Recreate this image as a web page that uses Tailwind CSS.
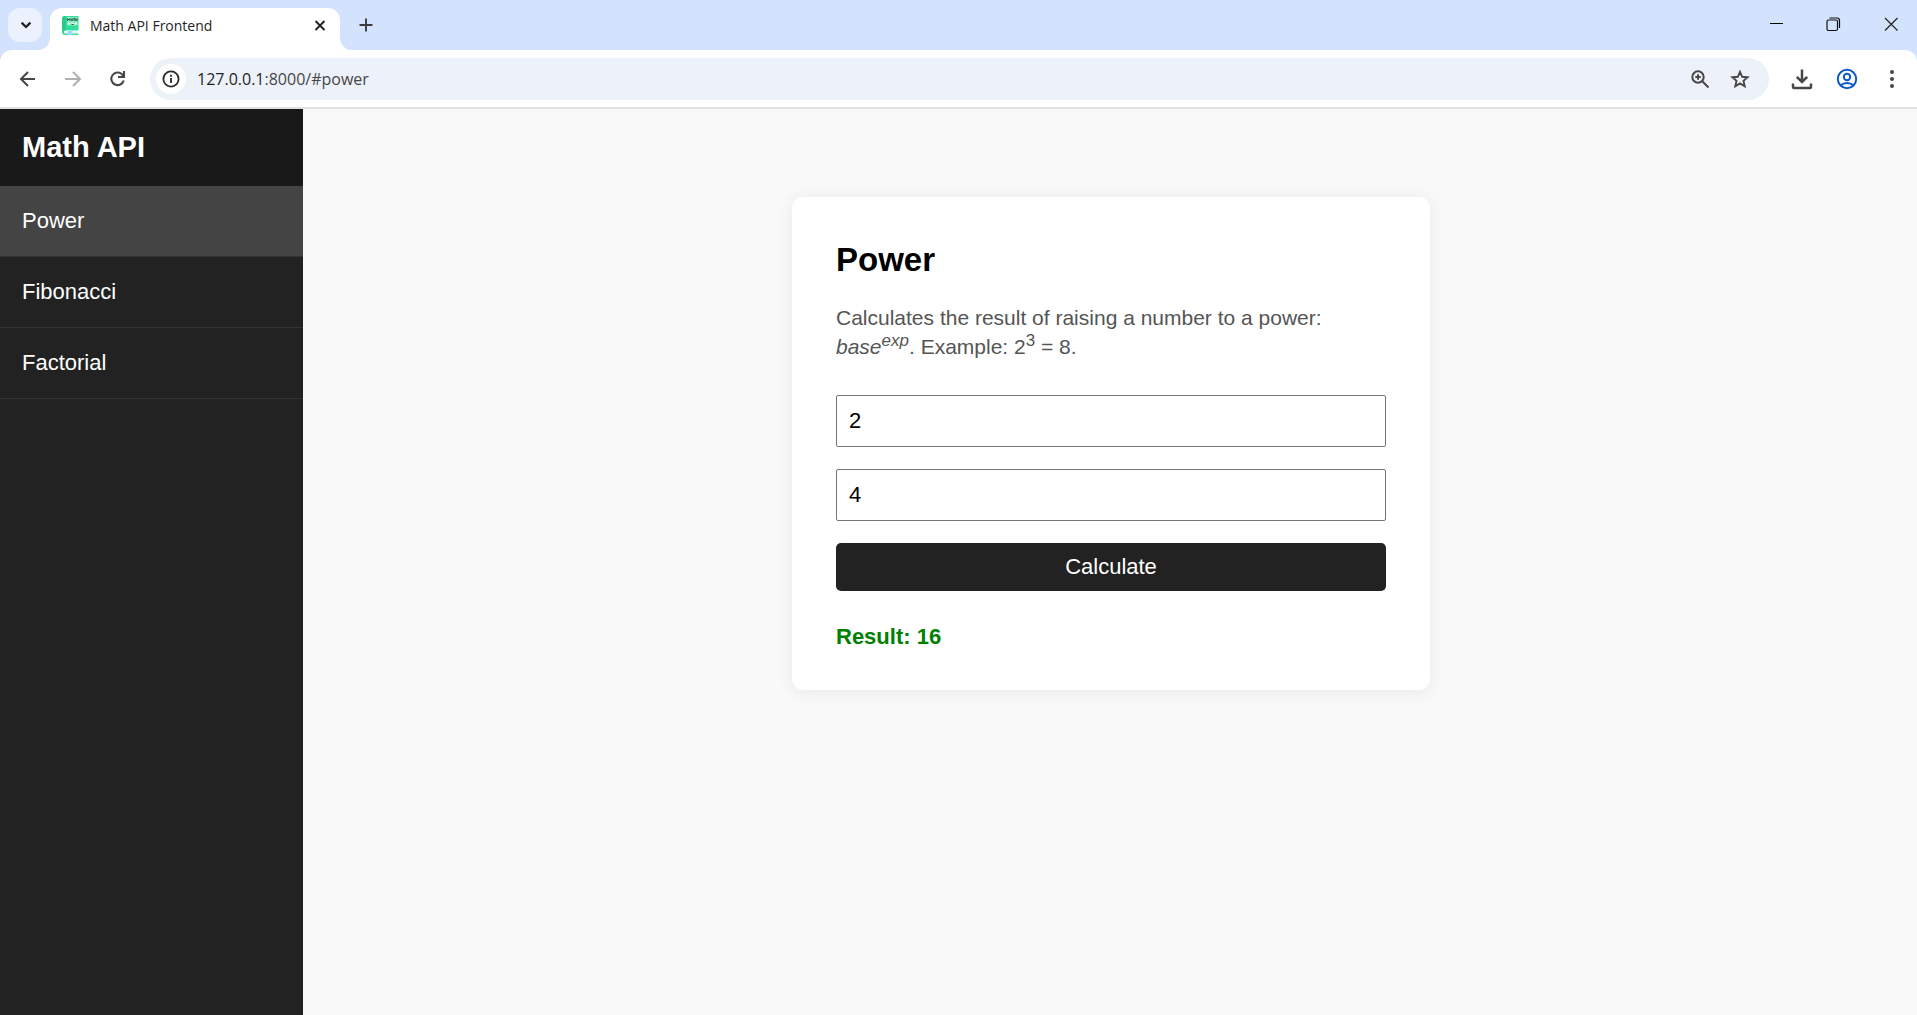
<!DOCTYPE html>
<html lang="en">
<head>
<meta charset="utf-8">
<title>Math API Frontend</title>
<script src="https://cdn.jsdelivr.net/npm/@tailwindcss/browser@4"></script>
</head>
<body class="flex min-h-screen flex-col bg-[#f9f9f9] font-['Liberation_Sans',Arial,sans-serif] text-black">

<!-- Browser chrome -->
<header class="bg-[#d3e3fd] font-['Open_Sans','Noto_Sans',sans-serif]">
  <div class="flex h-[50px] items-start">
    <button aria-label="Search tabs" class="mt-2 ml-2 flex size-[34px] items-center justify-center rounded-xl bg-[#ebf1fd]">
      <svg class="size-4" viewBox="0 0 16 16" fill="none" stroke="#1f1f1f" stroke-width="2.2"><path d="M4.600 5.600 9 10l4.400-4.400"/></svg>
    </button>
    <div class="relative mt-2 ml-2 flex h-[42px] w-[290px] items-center rounded-t-xl bg-white pr-3 pb-[7px] pl-3">
      <svg class="absolute bottom-0 -left-3 size-3" viewBox="0 0 12 12" fill="#fff"><path d="M12 0v12H0A12 12 0 0 0 12 0z"/></svg>
      <svg class="absolute -right-3 bottom-0 size-3" viewBox="0 0 12 12" fill="#fff"><path d="M0 0v12h12A12 12 0 0 1 0 0z"/></svg>
      <svg class="h-5 w-[17px]" viewBox="0 0 17 20">
        <path d="M3 0h13.500v14.500H3.500a1.500 1.500 0 0 0 0 3H16.500v1.500H3a3 3 0 0 1-3-3V3a3 3 0 0 1 3-3z" fill="#34dd9c"/>
        <path d="M0 3a3 3 0 0 1 3-3h1v14a4 4 0 0 0-4 2z" fill="#2bc98b"/>
        <path d="M3.500 15H16v2H3.500a1 1 0 0 1 0-2z" fill="#e8f6fb"/>
        <path d="M5.500 15h5v5L8 18.500 5.500 20z" fill="#9bdcff"/>
        <path d="M5 1h10.500v8.500H5z" fill="#8be9c4"/>
        <path d="M5.500 5V2.500L7 4l1-1.500V5M9 5l1-2.500L11 5M11.200 2.500h2M12.200 2.500V5M13.700 2.500V5M15.200 2.500V5M14 3.700h1" fill="none" stroke="#1d5b46" stroke-width=".9"/>
        <path d="M6 7.500h2M9.500 7.500h2M13 7.500h2" stroke="#eafff6" stroke-width="1.500"/><path d="M9.500 8.500h2" stroke="#1d5b46"/>
      </svg>
      <span class="ml-[11px] flex-1 text-sm text-[#1f1f1f]">Math API Frontend</span>
      <button aria-label="Close tab" class="flex size-4 items-center justify-center">
        <svg class="size-4" viewBox="0 0 16 16" stroke="#1f1f1f" stroke-width="1.900"><path d="m3.500 3 9 9m0-9-9 9"/></svg>
      </button>
    </div>
    <button aria-label="New tab" class="mt-[17px] ml-[18px] flex size-4 items-center justify-center">
      <svg class="size-4" viewBox="0 0 16 16" stroke="#3c3c3c" stroke-width="1.900"><path d="M8 1.500v13M1.500 8h13"/></svg>
    </button>
    <div class="ml-auto flex h-12 items-center gap-[42px] pr-[18px]">
      <button aria-label="Minimize" class="size-4"><svg class="size-4" viewBox="0 0 16 16" stroke="#000"><path d="M3 7.500h13"/></svg></button>
      <button aria-label="Restore" class="size-4"><svg class="size-4" viewBox="0 0 16 16" fill="none" stroke="#111" stroke-width="1.200"><rect x="2" y="4" width="10.500" height="10.500" rx="1.500"/><path d="M4.500 2H12a2.500 2.500 0 0 1 2.500 2.500V12"/></svg></button>
      <button aria-label="Close" class="size-4"><svg class="size-4" viewBox="0 0 16 16" stroke="#222" stroke-width="1.200"><path d="m2 2 12.500 12.500M14.500 2 2 14.500"/></svg></button>
    </div>
  </div>

  <div class="flex h-[59px] items-center rounded-t-xl border-b-2 border-[#e1e1e1] bg-white pr-3.5 pl-[18px]">
    <button aria-label="Back" class="size-5"><svg class="size-5" viewBox="0 0 20 20" fill="none" stroke="#474747" stroke-width="2"><path d="M17 10H3.500M10 3l-7 7 7 7"/></svg></button>
    <button aria-label="Forward" class="ml-[25px] size-5"><svg class="size-5" viewBox="0 0 20 20" fill="none" stroke="#b0b0b0" stroke-width="2"><path d="M2 10h14.500M10 3l7 7-7 7"/></svg></button>
    <button aria-label="Reload" class="ml-[25px] size-5"><svg class="size-5" viewBox="0 0 20 20" fill="none" stroke="#474747" stroke-width="2.100"><path d="M15.700 11.500A6.300 6.300 0 1 1 14 5.300l1.500 1.700"/><path d="M16 2v6h-6"/></svg></button>
    <div class="ml-[22px] flex h-[42px] flex-1 items-center rounded-full bg-[#edf1fa] pr-[19px] pl-1.5">
      <button aria-label="Site information" class="flex size-[30px] items-center justify-center rounded-full bg-white">
        <svg class="size-[18px]" viewBox="0 0 18 18" fill="none" stroke="#2b2b2b" stroke-width="1.800"><circle cx="9" cy="9" r="7.600"/><path d="M9 8v5M9 4.800v1.900"/></svg>
      </button>
      <div class="ml-[11px] flex-1 text-base text-[#474747]"><span class="text-[#1f1f1f]">127.0.0.1</span>:8000/#power</div>
      <button aria-label="Zoom" class="size-5"><svg class="size-5" viewBox="0 0 20 20" fill="none" stroke="#474747" stroke-width="2"><circle cx="8" cy="8" r="5.700"/><path d="m12 12 6.500 6.500M8 5.300v5.400M5.300 8h5.400"/></svg></button>
      <button aria-label="Bookmark this page" class="ml-5 size-5"><svg class="size-5" viewBox="0 0 20 20" fill="none" stroke="#474747" stroke-width="1.900"><path d="m10 2.800 2.200 5 5.400.5-4.100 3.600 1.200 5.300-4.700-2.800-4.700 2.800 1.200-5.300-4.100-3.600 5.400-.5z"/></svg></button>
    </div>
    <button aria-label="Downloads" class="ml-[22px] size-[22px]"><svg class="size-[22px]" viewBox="0 0 22 22" fill="none" stroke="#474747" stroke-width="2.500"><path d="M11 1.500v12M5.800 8.800l5.200 5.200 5.200-5.200M2 15.500V19a1 1 0 0 0 1 1h16a1 1 0 0 0 1-1v-3.500"/></svg></button>
    <button aria-label="Profile" class="ml-[23px] size-[22px]"><svg class="size-[22px]" viewBox="0 0 22 22" fill="none" stroke="#0b57d0" stroke-width="2"><circle cx="11" cy="11" r="9.200"/><circle cx="11" cy="9" r="3.200"/><path d="M4.500 17.500c3.500-3.300 9.500-3.300 13 0"/></svg></button>
    <button aria-label="Menu" class="ml-[23px] size-[22px]"><svg class="size-[22px]" viewBox="0 0 22 22" fill="#474747"><circle cx="11" cy="4" r="2"/><circle cx="11" cy="11" r="2"/><circle cx="11" cy="18" r="2"/></svg></button>
  </div>
</header>

<div class="flex flex-1">
  <aside class="w-[303px] shrink-0 bg-[#222] text-white">
    <h1 class="bg-[#191919] p-[22px] text-[29px] leading-[33px] font-bold">Math API</h1>
    <nav class="text-[22px] leading-[26px]">
      <a href="#power" class="block border-b border-[#333] bg-[#444] p-[22px]">Power</a>
      <a href="#fibonacci" class="block border-b border-[#333] p-[22px]">Fibonacci</a>
      <a href="#factorial" class="block border-b border-[#333] p-[22px]">Factorial</a>
    </nav>
  </aside>

  <main class="flex-1 pt-[88px] pr-11 pl-[46px]">
    <section class="mx-auto max-w-[638px] rounded-[11px] bg-white px-11 pt-11 pb-10 shadow-[0_2px_17px_rgba(0,0,0,0.07)]">
      <h2 class="text-[33px] leading-[38px] font-bold">Power</h2>
      <p class="mt-6 text-[21px] leading-[29px] text-[#555]">Calculates the result of raising a number to a power: <i>base<sup class="static align-super text-[17px]">exp</sup></i>. Example: 2<sup class="static align-super text-[17px]">3</sup> = 8.</p>
      <form class="mt-[34px] flex flex-col gap-[22px] text-[22px] leading-[26px]">
        <input type="text" aria-label="Base" value="2" class="h-[52px] rounded-xs border border-[#767676] px-3">
        <input type="text" aria-label="Exponent" value="4" class="h-[52px] rounded-xs border border-[#767676] px-3">
        <button type="button" class="h-12 rounded-[5px] bg-[#222] text-white">Calculate</button>
      </form>
      <p class="mt-[33px] text-[22px] leading-[26px] font-bold text-[#008000]">Result: 16</p>
    </section>
  </main>
</div>
</body>
</html>
